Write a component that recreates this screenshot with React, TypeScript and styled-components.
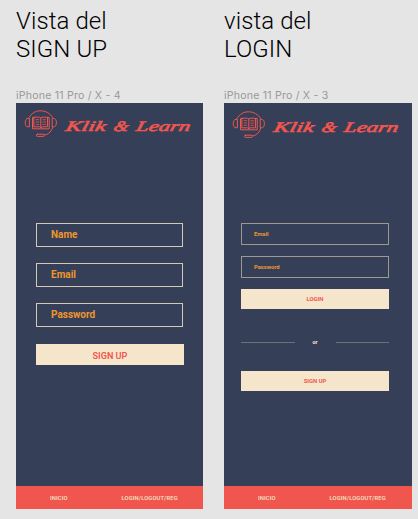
import React from "react";
import styled, { createGlobalStyle } from "styled-components";

const navy = "#353f57";
const coral = "#f0564e";
const cream = "#f5e6cb";
const orange = "#f0962e";

const GlobalStyle = createGlobalStyle`
  * { box-sizing: border-box; }
  body { margin: 0; background: #e5e5e5; font-family: Roboto, "Liberation Sans", sans-serif; }
`;

const Canvas = styled.main`
  display: flex;
  gap: 21px;
  width: 418px;
  height: 519px;
  padding: 7px 0 0 16px;
  overflow: hidden;
`;

const Column = styled.section<{ $width: number }>`
  width: ${(p) => p.$width}px;
`;

const Title = styled.h1`
  margin: 0;
  height: 81px;
  font-size: 24px;
  line-height: 28px;
  font-weight: 300;
  letter-spacing: 0.1px;
  color: #000;
  white-space: nowrap;
`;

const FrameLabel = styled.div`
  height: 15px;
  font-family: Inter, sans-serif;
  font-size: 10.6px;
  line-height: 15px;
  letter-spacing: 0.2px;
  color: #999;
  white-space: nowrap;
`;

const Phone = styled.div`
  display: flex;
  flex-direction: column;
  height: 406px;
  background: ${navy};
`;

const Header = styled.header<{ $top: number }>`
  height: 120px;
  padding: ${(p) => p.$top}px 0 0 8px;
`;

const Form = styled.form<{ $gap: number; $left: number }>`
  display: flex;
  flex-direction: column;
  gap: ${(p) => p.$gap}px;
  width: 148px;
  margin-left: ${(p) => p.$left}px;
  flex: 1;
`;

const Field = styled.label<{ $small?: boolean }>`
  display: flex;
  align-items: center;
  width: ${(p) => (p.$small ? 148 : 147)}px;
  height: ${(p) => (p.$small ? 22 : 24)}px;
  padding: ${(p) => (p.$small ? "0 0 1px 12px" : "0 0 1px 14px")};
  border: 1px solid ${(p) => (p.$small ? "#9b9992" : "#d4c9b7")};
  color: ${orange};
  font-size: ${(p) => (p.$small ? 5.8 : 10)}px;
  font-weight: 700;
`;

const Button = styled.button<{ $small?: boolean }>`
  height: ${(p) => (p.$small ? 20 : 21)}px;
  flex: none;
  margin-top: ${(p) => (p.$small ? 0 : 1)}px;
  padding: ${(p) => (p.$small ? 0 : 2)}px 0 0;
  border: 0;
  background: ${cream};
  color: ${coral};
  font-family: inherit;
  font-size: ${(p) => (p.$small ? 5.9 : 9.1)}px;
  font-weight: ${(p) => (p.$small ? 700 : 600)};
`;

const Divider = styled.div`
  display: flex;
  align-items: center;
  justify-content: space-between;
  height: 10px;
  margin: 17px 0 13px;
  color: ${cream};
  font-size: 5.6px;
  font-weight: 700;
`;

const Rule = styled.span`
  width: 53.5px;
  height: 1px;
  background: #6d717b;
`;

const TabBar = styled.nav`
  display: flex;
  align-items: center;
  height: 23px;
  padding-left: 34px;
  gap: 54px;
  background: ${coral};
  color: ${cream};
  font-size: 5.8px;
  font-weight: 500;
  letter-spacing: 0.12px;
`;

const Tab = styled.span`
  white-space: nowrap;
`;

const LogoArt = styled.svg`
  display: block;
`;

const Logo = () => (
  <LogoArt width="170" height="30" viewBox="0 0 170 30" aria-label="Klik & Learn">
    <g fill="none" stroke={coral} strokeWidth="1" strokeLinejoin="round" strokeLinecap="round">
      <path d="M5 7.5C7.5 3.2 11.4.8 16.5.8S26 3.2 28.6 7.5" />
      <path d="M5 8.4H4C2.2 8.4 1.2 10 1.2 12.6s1 4.2 2.8 4.2h1ZM28.6 8.4h1c1.8 0 2.8 1.6 2.8 4.2s-1 4.2-2.8 4.2h-1Z" />
      <path d="M28.6 16.8c-.5 4-3.5 7.5-8.2 8.2" />
      <rect x="12.4" y="24.2" width="8" height="2.2" rx="1" />
      <path d="M10.2 7.5H8.5v11.3h16.7V7.5h-1.7M10.2 7.2h5.3l1.3.8 1.3-.8h5.4v9.6h-5.4l-1.3 1-1.3-1h-5.3ZM16.8 8v9.6" />
      <path d="M12 9.7h2.8M12 12h2.8M12 14.3h2.8M21.7 9.7h-2.8M21.7 12h-2.8M21.7 14.3h-2.8" strokeWidth=".8" />
    </g>
    <g
      fill={coral}
      stroke={coral}
      strokeWidth="0.65"
      strokeLinejoin="round"
      fontFamily='"Liberation Serif", serif'
      fontWeight="400"
      fontStyle="italic"
      fontSize="14.5"
      transform="translate(5 0) skewX(-14)"
    >
      <text x="41" y="20.6" textLength="40" lengthAdjust="spacingAndGlyphs">Klik</text>
      <text x="89" y="20.6" textLength="15" lengthAdjust="spacingAndGlyphs">&amp;</text>
      <text x="111.5" y="20.6" textLength="54" lengthAdjust="spacingAndGlyphs">Learn</text>
    </g>
  </LogoArt>
);

const BottomNav = () => (
  <TabBar>
    <Tab>INICIO</Tab>
    <Tab>LOGIN/LOGOUT/REG</Tab>
  </TabBar>
);

export default function App() {
  return (
    <>
      <GlobalStyle />
      <Canvas>
        <Column $width={187}>
          <Title>Vista del<br />SIGN UP</Title>
          <FrameLabel>iPhone 11 Pro / X - 4</FrameLabel>
          <Phone>
            <Header $top={7}><Logo /></Header>
            <Form $gap={16} $left={20}>
              <Field>Name</Field>
              <Field>Email</Field>
              <Field>Password</Field>
              <Button type="button">SIGN UP</Button>
            </Form>
            <BottomNav />
          </Phone>
        </Column>
        <Column $width={188}>
          <Title>vista del<br />LOGIN</Title>
          <FrameLabel>iPhone 11 Pro / X - 3</FrameLabel>
          <Phone>
            <Header $top={8}><Logo /></Header>
            <Form $gap={11} $left={17}>
              <Field $small>Email</Field>
              <Field $small>Password</Field>
              <Button type="button" $small>LOGIN</Button>
              <Divider><Rule />or<Rule /></Divider>
              <Button type="button" $small>SIGN UP</Button>
            </Form>
            <BottomNav />
          </Phone>
        </Column>
      </Canvas>
    </>
  );
}
